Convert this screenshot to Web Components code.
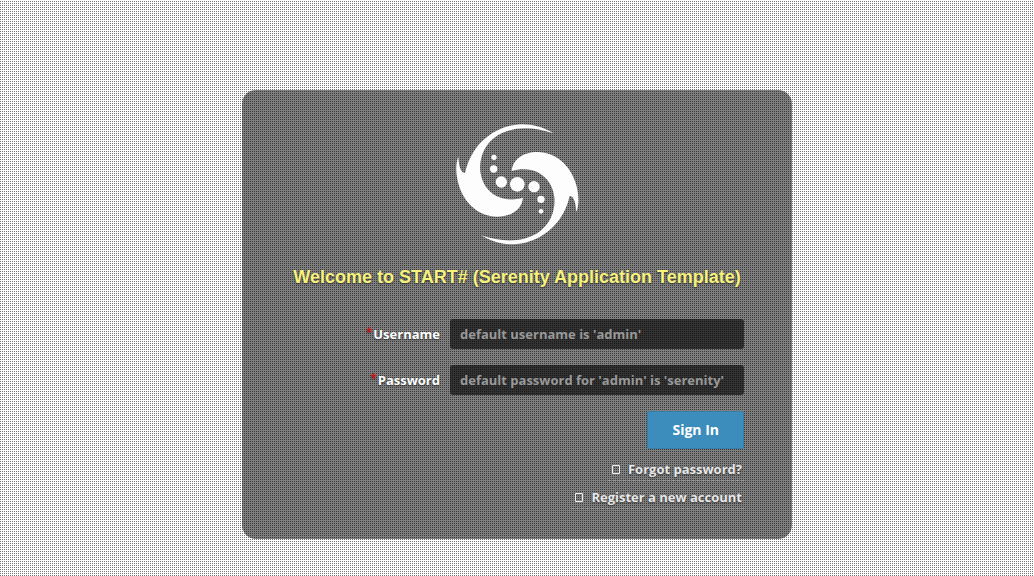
<!DOCTYPE html>
<html lang="en">
<head>
<meta charset="utf-8">
<title>Sign In</title>
<style>
html{min-height:100%;background:linear-gradient(90deg,transparent 1px,#fff 1px) 0 0/2px 2px,linear-gradient(#fff 1px,#747474 1px) 0 0/2px 2px}
body{margin:0;padding:90px 16px 32px;font:700 13px/20px "Open Sans",sans-serif;color:#fff}
</style>
</head>
<body>
<login-page></login-page>
<script>
const define = (name, html, setup) => customElements.define(name, class extends HTMLElement {
  connectedCallback() {
    if (this.shadowRoot) return;
    const t = document.createElement('template');
    t.innerHTML = html;
    this.attachShadow({mode: 'open', delegatesFocus: true}).append(t.content.cloneNode(true));
    if (setup) setup(this, this.shadowRoot);
  }
});

define('brand-logo', `
<style>:host{display:block}svg{display:block;width:123px;height:121px;margin:0 auto}</style>
<svg viewBox="48 41 369 363" fill="#fdfdfd" aria-hidden="true">
  <defs><path id="arm" d="M341 69C308 50 280 42 245 42C176 44 126 85 101 124C88 144 80 165 75 188C65 186 57 176 55 139C44 166 49 203 58 229C74 278 116 318 171 319C215 319 246 296 249 262C230 268 207 269 187 264C151 254 126 224 121 184C117 141 134 101 171 76C219 47 277 48 341 69Z"/></defs>
  <use href="#arm"/><use href="#arm" transform="rotate(180 232 222)"/>
  <circle cx="232" cy="222" r="22"/><circle cx="282" cy="229" r="17"/><circle cx="184" cy="215" r="17"/>
  <circle cx="303" cy="267" r="11"/><circle cx="161" cy="176" r="11"/><circle cx="303" cy="303" r="7"/><circle cx="162" cy="141" r="8"/>
</svg>`);

define('login-field', `
<style>
:host{display:flex;align-items:center;gap:10px}
label{flex:1;text-align:right;text-shadow:0 1px 2px #333}
sup{color:#e00;font-size:12px;line-height:0;vertical-align:2px;margin-right:1px;font-weight:400}
input{box-sizing:border-box;width:65%;max-width:294px;height:30px;padding:0 10px;border:0;border-radius:3px;background:rgba(0,0,0,.6);color:#fff;font:inherit}
input::placeholder{color:#999;opacity:1}
</style>
<label for="field"><sup>*</sup><slot></slot></label><input id="field">`, (el, root) => {
  const input = root.querySelector('input');
  input.type = el.getAttribute('type');
  input.placeholder = el.getAttribute('placeholder');
  input.setAttribute('aria-label', el.textContent);
});

define('action-link', `
<style>
:host{display:block}
a{display:flex;align-items:center;gap:8px;padding:0 2px 1px 4px;border-bottom:1px dashed #999;color:#e8e8e8;text-decoration:none;text-shadow:0 1px 2px #333}
svg{width:8px;height:9px}
</style>
<a href="#"><svg viewBox="0 0 8 9" fill="none" stroke="#eee" aria-hidden="true"><path d="M.5.5h7v8h-7z"/></svg><slot></slot></a>`);

define('login-page', `
<style>
:host{display:block}
main{box-sizing:border-box;max-width:550px;margin:0 auto;padding:34px 48px 30px;border-radius:14px;background:rgba(0,0,0,.5)}
h1{margin:20px 0 30px;font:700 18px/24px "Liberation Sans",sans-serif;color:#f7f27b;text-align:center;text-shadow:0 1px 2px #333}
form{display:grid;gap:16px}
.actions{display:flex;flex-direction:column;align-items:flex-end}
button{margin:0 0 10px;height:38px;padding:0 24px;border:1px solid #367fa9;border-radius:2px;background:#3c8dbc;color:#fff;font:700 14px/20px "Open Sans",sans-serif}
action-link+action-link{margin-top:6px}
</style>
<main>
  <brand-logo></brand-logo>
  <h1>Welcome to START# (Serenity Application Template)</h1>
  <form>
    <login-field type="text" placeholder="default username is 'admin'">Username</login-field>
    <login-field type="password" placeholder="default password for 'admin' is 'serenity'">Password</login-field>
    <div class="actions">
      <button type="button">Sign In</button>
      <action-link>Forgot password?</action-link>
      <action-link>Register a new account</action-link>
    </div>
  </form>
</main>`);
</script>
</body>
</html>
